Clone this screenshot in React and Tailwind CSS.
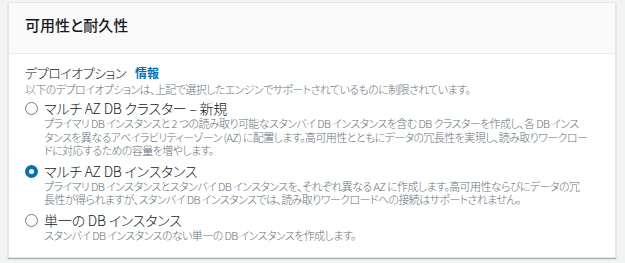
const options = [
  {
    id: 'cluster',
    label: 'マルチ AZ DB クラスター – 新規',
    lines: [
      'プライマリ DB インスタンスと 2 つの読み取り可能なスタンバイ DB インスタンスを含む DB クラスターを作成し、各 DB インス',
      'タンスを異なるアベイラビリティーゾーン (AZ) に配置します。高可用性とともにデータの冗長性を実現し、読み取りワークロー',
      'ドに対応するための容量を増やします。',
    ],
  },
  {
    id: 'multi',
    label: 'マルチ AZ DB インスタンス',
    lines: [
      'プライマリ DB インスタンスとスタンバイ DB インスタンスを、それぞれ異なる AZ に作成します。高可用性ならびにデータの冗',
      '長性が得られますが、スタンバイ DB インスタンスでは、読み取りワークロードへの接続はサポートされません。',
    ],
  },
  {
    id: 'single',
    label: '単一の DB インスタンス',
    lines: ['スタンバイ DB インスタンスのない単一の DB インスタンスを作成します。'],
  },
]

function Radio({ checked }) {
  if (checked) {
    return (
      <span className="mt-[3px] box-border block h-[13px] w-[13px] shrink-0 rounded-full border-[4px] border-[#0073bb] bg-white" />
    )
  }
  return (
    <span className="mt-[3px] box-border block h-[13px] w-[13px] shrink-0 rounded-full border border-[#6f7b83] bg-white" />
  )
}

export default function App() {
  const selected = 'multi'

  return (
    <div className="h-[263px] w-[625px] bg-[#f2f3f3] pt-[2px] pl-[8px] font-['Noto_Sans_CJK_JP',sans-serif] [font-feature-settings:'palt']">
      <div className="w-[608px] border border-[#e4e7e7] bg-white shadow-[0_1px_1px_0_rgba(0,28,36,0.3)]">
        {/* ヘッダー */}
        <div className="h-[51px] border-b border-[#eaeded] bg-[#fafafa] px-[16px] pt-[12px]">
          <h2 className="text-[15px] leading-[20px] font-medium text-[#16191f]">可用性と耐久性</h2>
        </div>

        {/* 本体 */}
        <div className="px-[16px] pt-[10px] pb-[15px]">
          <div className="flex items-center gap-[9px] text-[13px] leading-[18px] font-light tracking-[-0.5px] text-[#16191f]">
            <span>デプロイオプション</span>
            <span className="text-[12px] font-bold tracking-normal text-[#0073bb]">情報</span>
          </div>
          <p className="text-[11px] leading-[14px] font-light tracking-[-0.6px] text-[#687078]">
            以下のデプロイオプションは、上記で選択したエンジンでサポートされているものに制限されています。
          </p>

          <div className="mt-[3px] flex flex-col gap-[4px]">
            {options.map((opt) => (
              <div key={opt.id} className="flex gap-[6px]">
                <Radio checked={opt.id === selected} />
                <div>
                  <div className="text-[14px] leading-[18px] font-light tracking-[-0.2px] text-[#16191f]">{opt.label}</div>
                  <div className="text-[11px] leading-[13.5px] font-light tracking-[-0.6px] text-[#687078]">
                    {opt.lines.map((line, i) => (
                      <div key={i} className="whitespace-nowrap">{line}</div>
                    ))}
                  </div>
                </div>
              </div>
            ))}
          </div>
        </div>
      </div>
    </div>
  )
}
